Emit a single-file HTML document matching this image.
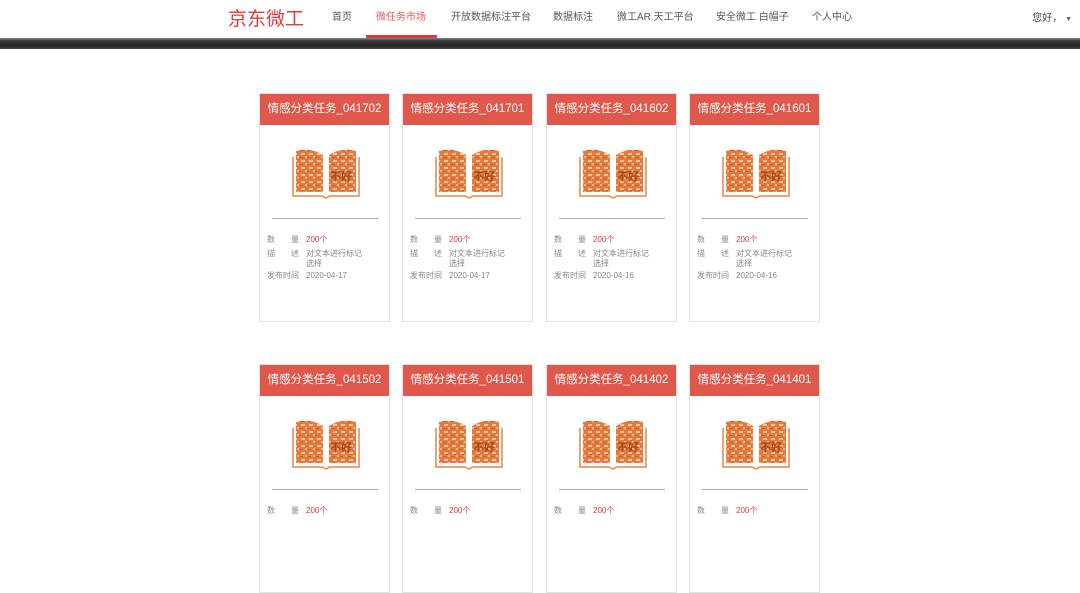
<!DOCTYPE html>
<html><head><meta charset="utf-8"><style>
*{margin:0;padding:0;box-sizing:border-box}
body{width:1080px;height:518px;overflow:hidden;background:#fff;font-family:"Liberation Sans","Noto Sans CJK SC",sans-serif;position:relative}
.hdr{position:absolute;left:0;top:0;width:1080px;height:38px;background:#fff}
.logo{position:absolute;left:228px;top:4px;font-size:19px;color:#e2393b;letter-spacing:0px;font-family:"Noto Sans CJK SC",sans-serif}
.nav{position:absolute;top:8px;font-size:10px;color:#555;white-space:nowrap}
.act{color:#e55}
.ul{position:absolute;left:366px;top:35px;width:71px;height:3px;background:#e2393b}
.band{position:absolute;left:0;top:38px;width:1080px;height:11px;background:linear-gradient(#888 0,#3a3a3a 25%,#262626 70%,#444 100%)}
.hi{position:absolute;right:8px;top:9px;font-size:10px;color:#444}
.card{position:absolute;width:131px;height:229px;border:1px solid #e3e3e3;background:#fff}
.ch{height:31px;background:#e0584c;color:#fff;font-size:11.5px;text-align:center;line-height:31px;white-space:nowrap}
.bk{position:absolute;left:32px;top:51px}
.ln{position:absolute;left:12px;top:124px;width:106px;height:1px;background:#aaa}
.r{position:absolute;left:7px;font-size:8px;color:#888;line-height:10px}
.r b{font-weight:normal;display:inline-block;width:38px}
.r i{font-style:normal;position:absolute;left:39px;width:80px}
.red{color:#e2393b}
</style></head><body>
<div class="hdr">
<div class="logo">京东微工</div>
<div class="nav" style="left:332px">首页</div>
<div class="nav act" style="left:376px">微任务市场</div>
<div class="nav" style="left:451px">开放数据标注平台</div>
<div class="nav" style="left:553px">数据标注</div>
<div class="nav" style="left:617px">微工AR 天工平台</div>
<div class="nav" style="left:716px">安全微工 白帽子</div>
<div class="nav" style="left:812px">个人中心</div>
<div class="hi">您好， <span style="font-size:7px;color:#666">▼</span></div>
<div class="ul"></div>
</div>
<div class="band"></div>
<svg width="0" height="0" style="position:absolute"><defs>
<pattern id="p" width="8" height="7" patternUnits="userSpaceOnUse"><rect width="8" height="7" fill="#e47a3e"/><rect x="1" y="1" width="4" height="2" fill="#f6c39d"/><rect x="5" y="4" width="2" height="2" fill="#f3b386"/><rect x="0" y="5" width="3" height="1" fill="#c65f2a"/></pattern>
<g id="book">
<path d="M4 6 L4 47 L31 47 L31 10 Q18 2 4 6Z" fill="url(#p)"/>
<path d="M37 10 L37 47 L64 47 L64 6 Q50 2 37 10Z" fill="url(#p)"/>
<path d="M1 12 L1 51 L30 51 L34 53 L38 51 L67 51 L67 12" fill="none" stroke="#e9844a" stroke-width="1.5"/>
<text x="38" y="35" font-size="11" fill="#a8461a" font-family="Noto Sans CJK SC,sans-serif" font-weight="bold">不好</text>
</g></defs></svg>
<div class="card" style="left:259px;top:93px"><div class="ch">情感分类任务_041702</div><svg class="bk" width="68" height="56"><use href="#book"/></svg><div class="ln"></div><div class="r" style="top:141px"><b>数　　量</b><i class="red">200个</i></div><div class="r" style="top:155px"><b>描　　述</b><i>对文本进行标记<br>选择</i></div><div class="r" style="top:177px"><b>发布时间</b><i>2020-04-17</i></div></div>
<div class="card" style="left:402px;top:93px"><div class="ch">情感分类任务_041701</div><svg class="bk" width="68" height="56"><use href="#book"/></svg><div class="ln"></div><div class="r" style="top:141px"><b>数　　量</b><i class="red">200个</i></div><div class="r" style="top:155px"><b>描　　述</b><i>对文本进行标记<br>选择</i></div><div class="r" style="top:177px"><b>发布时间</b><i>2020-04-17</i></div></div>
<div class="card" style="left:546px;top:93px"><div class="ch">情感分类任务_041602</div><svg class="bk" width="68" height="56"><use href="#book"/></svg><div class="ln"></div><div class="r" style="top:141px"><b>数　　量</b><i class="red">200个</i></div><div class="r" style="top:155px"><b>描　　述</b><i>对文本进行标记<br>选择</i></div><div class="r" style="top:177px"><b>发布时间</b><i>2020-04-16</i></div></div>
<div class="card" style="left:689px;top:93px"><div class="ch">情感分类任务_041601</div><svg class="bk" width="68" height="56"><use href="#book"/></svg><div class="ln"></div><div class="r" style="top:141px"><b>数　　量</b><i class="red">200个</i></div><div class="r" style="top:155px"><b>描　　述</b><i>对文本进行标记<br>选择</i></div><div class="r" style="top:177px"><b>发布时间</b><i>2020-04-16</i></div></div>
<div class="card" style="left:259px;top:364px"><div class="ch">情感分类任务_041502</div><svg class="bk" width="68" height="56"><use href="#book"/></svg><div class="ln"></div><div class="r" style="top:141px"><b>数　　量</b><i class="red">200个</i></div></div>
<div class="card" style="left:402px;top:364px"><div class="ch">情感分类任务_041501</div><svg class="bk" width="68" height="56"><use href="#book"/></svg><div class="ln"></div><div class="r" style="top:141px"><b>数　　量</b><i class="red">200个</i></div></div>
<div class="card" style="left:546px;top:364px"><div class="ch">情感分类任务_041402</div><svg class="bk" width="68" height="56"><use href="#book"/></svg><div class="ln"></div><div class="r" style="top:141px"><b>数　　量</b><i class="red">200个</i></div></div>
<div class="card" style="left:689px;top:364px"><div class="ch">情感分类任务_041401</div><svg class="bk" width="68" height="56"><use href="#book"/></svg><div class="ln"></div><div class="r" style="top:141px"><b>数　　量</b><i class="red">200个</i></div></div>
</body></html>
